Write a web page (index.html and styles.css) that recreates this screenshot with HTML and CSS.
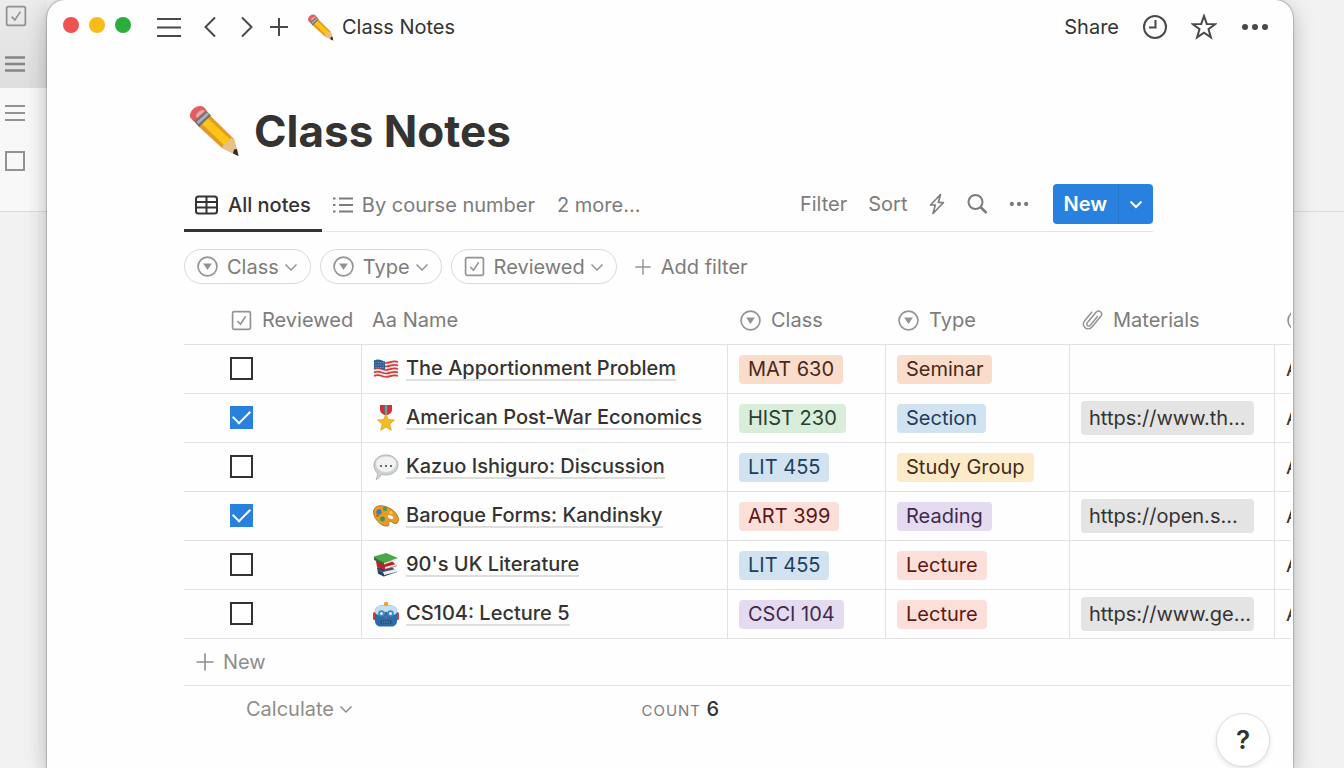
FILE: index.html
```html
<!DOCTYPE html>
<html lang="en">
<head>
  <meta charset="UTF-8">
  <meta name="viewport" content="width=device-width, initial-scale=1">
  <title>Class Notes</title>
  <link rel="stylesheet" href="styles.css">
</head>
<body>
  <svg class="sprite" aria-hidden="true">
    <symbol id="select" viewBox="0 0 20 20">
      <circle cx="10" cy="10" r="9" fill="none" stroke="currentColor" stroke-width="1.6"/>
      <path d="M5.8 7.2h8.4L10 13.4z" fill="currentColor"/>
    </symbol>
    <symbol id="check" viewBox="0 0 20 20">
      <rect x="1.5" y="1.5" width="17" height="17" rx="1.5" fill="none" stroke="currentColor" stroke-width="1.6"/>
      <path d="M6 10.5l3 3 5-7.500" fill="none" stroke="currentColor" stroke-width="1.5"/>
    </symbol>
    <symbol id="down" viewBox="0 0 14 14">
      <path d="M1.500 4.500L7 10l5.500-5.500" fill="none" stroke="currentColor" stroke-width="1.5"/>
    </symbol>
    <symbol id="plus" viewBox="0 0 20 20">
      <path d="M10 1.500v17M1.500 10h17" fill="none" stroke="currentColor" stroke-width="1.6"/>
    </symbol>
    <symbol id="dots" viewBox="0 0 28 28">
      <g fill="currentColor"><circle cx="4" cy="14" r="3"/><circle cx="14" cy="14" r="3"/><circle cx="24" cy="14" r="3"/></g>
    </symbol>
    <symbol id="lines" viewBox="0 0 24 24">
      <path d="M0 4h24M0 12.500h24M0 21h24" fill="none" stroke="currentColor" stroke-width="2"/>
    </symbol>
    <symbol id="pencil" viewBox="0 0 52 52">
      <path d="M10 21L22 10.500 46 34l4.500 17L34 43z" fill="#e39a22"/>
      <path d="M13.500 18.500L19.500 13 43 35l-6 6z" fill="#fcc419"/>
      <path d="M34 43l2.500-5 4.500-1 1.500-4 3.500 1 4.500 17z" fill="#e8c08c"/>
      <path d="M45 48.500l1-4 3-.5 1.500 7z" fill="#2d2b2b"/>
      <path d="M5 15L17 4.500l6 6L11 22z" fill="#6c7276"/>
      <path d="M8.500 17l10.500-9.500 2 2L10.500 19z" fill="#a9afb3"/>
      <path d="M6 16.500C2 13 1 11 2.500 8 4 4 8 1 12 1c3 0 5.500 2 6.500 4.500z" fill="#df5f62"/>
      <path d="M8 12c0-4 3-6.500 7-7l2 1-8 7z" fill="#efa5a3"/>
    </symbol>
    <symbol id="flag" viewBox="0 0 26 26">
      <path d="M1 5c5-3 8 1 12 1s7-3 12-1v15c-5-2-8 1-12 1s-7-3-12 0z" fill="#f3eded"/>
      <path d="M1 6c5-3 8 1 12 1s7-3 12-1M1 9.500c5-3 8 1 12 1s7-3 12-1M1 13c5-3 8 1 12 1s7-3 12-1M1 16.500c5-3 8 1 12 1s7-3 12-1M1 20c5-3 8 1 12 1s7-3 12-1" fill="none" stroke="#d83b3d" stroke-width="1.700"/>
      <path d="M1 4.500c5-2.500 8 .5 11 1v8c-3-.5-6-3-11-.5z" fill="#2c5f98"/>
      <path d="M2.500 6.500h9M2.500 9h9M2.500 11.500h9" stroke="#9dbbd6" stroke-width=".8" stroke-dasharray="1 1.400"/>
    </symbol>
    <symbol id="medal" viewBox="0 0 26 26">
      <path d="M7 0h12v5c0 2-2 4-4.500 5h-3C9 9 7 7 7 5z" fill="#d62c38"/>
      <path d="M11 0h4v9h-4z" fill="#536b75"/>
      <path d="M12.600 0h.9v9h-.9z" fill="#b9c8cc"/>
      <path d="M13 9l2.300 5.600 6.200.4-4.800 4 1.600 6.300L13 22l-5.300 3.300L9.300 19l-4.800-4 6.200-.4z" fill="#f6bd22" stroke="#dda01e" stroke-width=".8"/>
    </symbol>
    <symbol id="speech" viewBox="0 0 26 26">
      <path d="M13 1c7 0 12 4.500 12 10S20 21 13 21c-1.700 0-3.300-.2-4.700-.7C7 23 5 25 3 25.500c1.200-2 1.600-4 1.300-6.500C2.300 17 1 14.300 1 11 1 5.500 6 1 13 1z" fill="#cfd1d2" stroke="#a4a7a9" stroke-width=".8"/>
      <path d="M13 2.500c6 0 10 3 10 7.500s-5 8-10 8-10-3.500-10-8 4-7.500 10-7.500z" fill="#f1f2f2"/>
      <g fill="#494b4d"><circle cx="8" cy="12" r="1.100"/><circle cx="13" cy="12" r="1.100"/><circle cx="18" cy="12" r="1.100"/></g>
    </symbol>
    <symbol id="palette" viewBox="0 0 26 26">
      <path d="M.5 9C.5 4 5 2 10 3c8 1 15.500 8 15.500 13.500 0 3-2 4.500-4 4-2-.5-3-3-5-2s1 4-2 4.500C8 24 .5 15 .5 9z" fill="#e99b27" stroke="#b06c20" stroke-width=".9"/>
      <circle cx="6" cy="9" r="2.700" fill="#357fb5"/><circle cx="12" cy="6" r="2.200" fill="#45a249"/>
      <circle cx="18" cy="9.500" r="1.600" fill="#f7cf4c"/><circle cx="9.500" cy="16" r="2.500" fill="#469451"/>
      <circle cx="4.500" cy="12.700" r="1.100" fill="#c44231"/><ellipse cx="17.500" cy="14" rx="3" ry="1.700" transform="rotate(25 17.500 14)" fill="#fffdf7"/>
    </symbol>
    <symbol id="books" viewBox="0 0 26 26">
      <path d="M4 16l15-1 5 5-13 4.500-6-3z" fill="#35597a"/>
      <path d="M10 20l13-3v3l-12 3z" fill="#f2eee8"/>
      <path d="M3 9l15-1 6 6-13 4-7-3z" fill="#c01f2e"/>
      <path d="M12 15l11-3v2l-11 3z" fill="#f0e8df"/>
      <path d="M1 4.500L13 1l12 5-14 5z" fill="#4ba847"/>
      <path d="M1 4.500V8l10 5v-2z" fill="#287435"/>
      <path d="M11 11l13-4.500V8l-13 4.500z" fill="#dfe9da"/>
      <path d="M4 15l7 3v1l-6-2zM5 19l6 3v2.500l-6-3z" fill="#263e58"/>
    </symbol>
    <symbol id="robot" viewBox="0 0 26 26">
      <circle cx="13" cy="3" r="2.300" fill="#eda12f"/>
      <rect x="0" y="11" width="5" height="8" rx="1.500" fill="#c84135"/>
      <rect x="21" y="11" width="5" height="8" rx="1.500" fill="#c84135"/>
      <path d="M8 4.500h10c4 0 6 3 6 7V20c0 3.500-2.500 5.500-6 5.500H8c-3.500 0-6-2-6-5.500v-8.500c0-4 2-7 6-7z" fill="#2a6ca8"/>
      <path d="M8 4.500h10c4 0 6 3 6 7-2 3-5 3-7 2l-4-3-4 3c-2 1-5 1-7-2 0-4 2-7 6-7z" fill="#c3e0f0"/>
      <circle cx="8.500" cy="12.500" r="3.300" fill="#3c88c6"/><circle cx="17.500" cy="12.500" r="3.300" fill="#3c88c6"/>
      <circle cx="8.500" cy="12.500" r="1.500" fill="#e4f5fb"/><circle cx="17.500" cy="12.500" r="1.500" fill="#e4f5fb"/>
      <path d="M11.300 17l1.700-3 1.700 3z" fill="#e04a3e"/>
      <rect x="7.500" y="19.500" width="11" height="3" rx="1" fill="#1c4672"/>
      <path d="M9 21h8" stroke="#8cb9d3" stroke-width="1.200" stroke-dasharray="1.300 .9"/>
    </symbol>
  </svg>

  <div class="desktop">
    <aside class="rail">
      <div class="rail-top">
        <svg width="22" height="22"><use href="#check"/></svg>
        <svg class="rail-bold" width="20" height="20" viewBox="0 0 20 20"><path d="M0 3.500h20M0 10h20M0 16.500h20" stroke="currentColor" stroke-width="2.500"/></svg>
      </div>
      <div class="rail-mid">
        <svg width="20" height="20" viewBox="0 0 20 20"><path d="M0 3h20M0 10h20M0 17h20" stroke="currentColor" stroke-width="2"/></svg>
        <svg width="20" height="20" viewBox="0 0 20 20"><path d="M1 1h18v18H1z" fill="none" stroke="currentColor" stroke-width="2"/></svg>
      </div>
    </aside>

    <main class="window">
      <header class="topbar">
        <div class="lights"><i class="red"></i><i class="yellow"></i><i class="green"></i></div>
        <button class="icon-btn menu" aria-label="Menu"><svg width="24" height="24"><use href="#lines"/></svg></button>
        <button class="icon-btn back" aria-label="Back"><svg width="12" height="22" viewBox="0 0 12 22"><path d="M11 1.500L1.500 11l9.500 9.500" fill="none" stroke="currentColor" stroke-width="2"/></svg></button>
        <button class="icon-btn forward" aria-label="Forward"><svg width="12" height="22" viewBox="0 0 12 22"><path d="M1 1.500l9.500 9.500L1 20.500" fill="none" stroke="currentColor" stroke-width="2"/></svg></button>
        <button class="icon-btn add" aria-label="New tab"><svg width="20" height="20" viewBox="0 0 20 20"><path d="M10 1v18M1 10h18" stroke="currentColor" stroke-width="2"/></svg></button>
        <a class="crumb" href="#"><svg width="27" height="27"><use href="#pencil"/></svg>Class Notes</a>
        <div class="top-actions">
          <button class="share">Share</button>
          <button class="icon-btn" aria-label="Updates"><svg width="24" height="24" viewBox="0 0 24 24" fill="none" stroke="currentColor" stroke-width="2"><circle cx="12" cy="12" r="11"/><path d="M12.500 5v7.500H6"/></svg></button>
          <button class="icon-btn" aria-label="Favorite"><svg width="26" height="26" viewBox="0 0 26 26" fill="none" stroke="currentColor" stroke-width="2"><path d="M13 2l2.800 7.900 8.400.2-6.700 5.100 2.400 8.200L13 18.600l-6.900 4.800 2.400-8.200-6.700-5.100 8.400-.2z"/></svg></button>
          <button class="icon-btn" aria-label="More"><svg width="28" height="28"><use href="#dots"/></svg></button>
        </div>
      </header>

      <div class="page">
        <h1><svg width="52" height="52"><use href="#pencil"/></svg>Class Notes</h1>

        <div class="viewbar">
          <button class="tab active">
            <svg width="24" height="20" viewBox="0 0 24 20" fill="none" stroke="currentColor" stroke-width="2"><rect x="1" y="1.500" width="21" height="17" rx="2.500"/><path d="M1 7h21M1 12.500h21M11.500 2v16"/></svg>All notes
          </button>
          <button class="tab">
            <svg width="20" height="18" viewBox="0 0 20 18" fill="none" stroke="currentColor" stroke-width="1.800"><path d="M6 2.500h14M6 9h14M6 15.500h14M0 2.500h2.500M0 9h2.500M0 15.500h2.500"/></svg>By course number
          </button>
          <button class="tab">2 more...</button>
          <div class="tools">
            <button>Filter</button>
            <button>Sort</button>
            <button aria-label="Automations"><svg width="16" height="22" viewBox="0 0 16 22" fill="none" stroke="currentColor" stroke-width="1.600" stroke-linejoin="round"><path d="M11.500 1.500L1.500 12h4.800L4 20.500 14.500 9.500H9.300z"/></svg></button>
            <button aria-label="Search"><svg width="22" height="22" viewBox="0 0 22 22" fill="none" stroke="currentColor" stroke-width="2"><circle cx="9.500" cy="9" r="7"/><path d="M14.500 14l6 6" stroke-width="2.500"/></svg></button>
            <button aria-label="View options"><svg width="20" height="20"><use href="#dots"/></svg></button>
          </div>
          <div class="new">
            <button class="new-main">New</button>
            <button class="new-more" aria-label="Templates"><svg width="14" height="14" viewBox="0 0 14 14"><path d="M1.500 4.500L7 10l5.500-5.500" fill="none" stroke="currentColor" stroke-width="2"/></svg></button>
          </div>
        </div>

        <div class="filters">
          <button class="pill"><svg width="21" height="21"><use href="#select"/></svg>Class<svg class="caret" width="14" height="14"><use href="#down"/></svg></button>
          <button class="pill"><svg width="21" height="21"><use href="#select"/></svg>Type<svg class="caret" width="14" height="14"><use href="#down"/></svg></button>
          <button class="pill"><svg width="21" height="21"><use href="#check"/></svg>Reviewed<svg class="caret" width="14" height="14"><use href="#down"/></svg></button>
          <button class="add-filter"><svg width="18" height="18"><use href="#plus"/></svg>Add filter</button>
        </div>

        <div class="table-wrap">
          <table>
            <colgroup>
              <col class="c-reviewed"><col class="c-name"><col class="c-class"><col class="c-type"><col class="c-materials"><col class="c-extra">
            </colgroup>
            <thead>
              <tr>
                <th class="reviewed"><span><svg width="21" height="21"><use href="#check"/></svg>Reviewed</span></th>
                <th><span class="name-head">Aa Name</span></th>
                <th><span><svg width="21" height="21"><use href="#select"/></svg>Class</span></th>
                <th><span><svg width="21" height="21"><use href="#select"/></svg>Type</span></th>
                <th><span><svg width="21" height="24" viewBox="0 0 21 24" fill="none" stroke="currentColor" stroke-width="1.500" stroke-linecap="round"><path d="M15.500 8.500l-7.200 8.700c-1.700 2-4.700-.2-3-2.400L13.800 4.500c3-3.500 7.700.3 5 3.800L10 19c-4 4.700-11.500-.5-7.300-6.200l7-8.500"/></svg>Materials</span></th>
                <th><span><svg width="21" height="21"><use href="#select"/></svg></span></th>
              </tr>
            </thead>
            <tbody>
              <tr>
                <td class="reviewed"><input type="checkbox" aria-label="Reviewed: The Apportionment Problem"></td>
                <td><div class="name"><svg width="26" height="26"><use href="#flag"/></svg><a href="#">The Apportionment Problem</a></div></td>
                <td><span class="tag orange">MAT 630</span></td>
                <td><span class="tag orange">Seminar</span></td>
                <td></td>
                <td>A</td>
              </tr>
              <tr>
                <td class="reviewed"><input type="checkbox" checked aria-label="Reviewed: American Post-War Economics"></td>
                <td><div class="name"><svg width="26" height="26"><use href="#medal"/></svg><a href="#">American Post-War Economics</a></div></td>
                <td><span class="tag green">HIST 230</span></td>
                <td><span class="tag blue">Section</span></td>
                <td><a class="file" href="#">https://www.th...</a></td>
                <td>A</td>
              </tr>
              <tr>
                <td class="reviewed"><input type="checkbox" aria-label="Reviewed: Kazuo Ishiguro: Discussion"></td>
                <td><div class="name"><svg width="26" height="26"><use href="#speech"/></svg><a href="#">Kazuo Ishiguro: Discussion</a></div></td>
                <td><span class="tag blue">LIT 455</span></td>
                <td><span class="tag yellow">Study Group</span></td>
                <td></td>
                <td>A</td>
              </tr>
              <tr>
                <td class="reviewed"><input type="checkbox" checked aria-label="Reviewed: Baroque Forms: Kandinsky"></td>
                <td><div class="name"><svg width="26" height="26"><use href="#palette"/></svg><a href="#">Baroque Forms: Kandinsky</a></div></td>
                <td><span class="tag red">ART 399</span></td>
                <td><span class="tag purple">Reading</span></td>
                <td><a class="file" href="#">https://open.s...</a></td>
                <td>A</td>
              </tr>
              <tr>
                <td class="reviewed"><input type="checkbox" aria-label="Reviewed: 90's UK Literature"></td>
                <td><div class="name"><svg width="26" height="26"><use href="#books"/></svg><a href="#">90's UK Literature</a></div></td>
                <td><span class="tag blue">LIT 455</span></td>
                <td><span class="tag red">Lecture</span></td>
                <td></td>
                <td>A</td>
              </tr>
              <tr>
                <td class="reviewed"><input type="checkbox" aria-label="Reviewed: CS104: Lecture 5"></td>
                <td><div class="name"><svg width="26" height="26"><use href="#robot"/></svg><a href="#">CS104: Lecture 5</a></div></td>
                <td><span class="tag purple">CSCI 104</span></td>
                <td><span class="tag red">Lecture</span></td>
                <td><a class="file" href="#">https://www.ge...</a></td>
                <td>A</td>
              </tr>
            </tbody>
            <tfoot>
              <tr class="new-row">
                <td colspan="6"><button><svg width="20" height="20"><use href="#plus"/></svg>New</button></td>
              </tr>
              <tr class="calc-row">
                <td><button>Calculate<svg class="caret" width="14" height="14"><use href="#down"/></svg></button></td>
                <td class="count"><small>COUNT</small> 6</td>
                <td colspan="4"></td>
              </tr>
            </tfoot>
          </table>
        </div>
      </div>

      <button class="help" aria-label="Help">?</button>
    </main>

    <div class="behind"></div>
  </div>
</body>
</html>
```
FILE: styles.css
```css
* {
  box-sizing: border-box;
}
body {
  margin: 0;
  background: #f2f2f2;
  color: #343332;
  font-family: Inter, "Liberation Sans", sans-serif;
  font-size: 20px;
  line-height: 24px;
}
button {
  display: flex;
  align-items: center;
  padding: 0;
  border: none;
  background: none;
  color: inherit;
  font: inherit;
  white-space: nowrap;
  cursor: pointer;
}
a {
  color: inherit;
  text-decoration: none;
}
svg {
  display: block;
  flex: none;
}
.sprite {
  position: absolute;
  width: 0;
  height: 0;
}

.desktop {
  display: grid;
  grid-template-columns: 47px 1fr 51px;
  height: 100vh;
  overflow: hidden;
}
.rail {
  color: #929292;
}
.rail-top,
.rail-mid {
  display: flex;
  flex-direction: column;
  padding-left: 5px;
}
.rail-top {
  height: 88px;
  padding-top: 5px;
  gap: 27px;
  background: linear-gradient(#ececec, #dedede);
}
.rail-bold {
  color: #858585;
}
.rail-mid {
  height: 124px;
  padding-top: 15px;
  gap: 28px;
  background: #f8f8f8;
  border-bottom: 1px solid #dcdcdc;
}
.behind {
  height: 212px;
  border-bottom: 1px solid #dcdcdc;
}

/* window */
.window {
  position: relative;
  min-width: 0;
  overflow: hidden;
  background: #fefefe;
  border-radius: 18px 18px 0 0;
  box-shadow: 0 0 2px rgba(0,0,0,0.6), 0 6px 22px rgba(0,0,0,0.25);
}
.topbar {
  display: flex;
  align-items: center;
  height: 54px;
  padding: 0 24px 0 16px;
}
.lights {
  display: flex;
  gap: 10px;
  margin-right: 26px;
  padding-bottom: 5px;
}
.lights i {
  width: 16px;
  height: 16px;
  border-radius: 50%;
}
.lights .red { background: #ed5350; }
.lights .yellow { background: #f9bb17; }
.lights .green { background: #29ae3b; }
.icon-btn {
  color: #4a4948;
}
.menu { margin-right: 23px; }
.back { margin-right: 25px; }
.forward { margin-right: 16px; }
.add { margin-right: 18px; }
.crumb {
  display: flex;
  align-items: center;
  gap: 8px;
}
.top-actions {
  display: flex;
  align-items: center;
  gap: 24px;
  margin-left: auto;
}

/* page */
.page {
  padding: 48px 2px 0 137px;
}
h1 {
  display: flex;
  align-items: center;
  gap: 14px;
  margin: 0;
  padding-left: 4px;
  font-size: 44px;
  line-height: 58px;
  font-weight: 700;
}
.viewbar {
  display: flex;
  align-items: center;
  height: 50px;
  margin: 22px 138px 0 0;
  border-bottom: 1px solid #e4e6e6;
  color: #7d7c7b;
}
.tab {
  height: 50px;
  padding: 0 11px;
  gap: 9px;
  border-bottom: 3px solid transparent;
}
.tab.active {
  color: #343332;
  font-weight: 500;
  border-color: #343332;
}
.tools {
  display: flex;
  align-items: center;
  gap: 21px;
  margin-left: auto;
  padding-bottom: 6px;
}
.new {
  display: flex;
  height: 40px;
  margin: 0 0 6px 24px;
  border-radius: 4px;
  background: #2981df;
  color: #fff;
  overflow: hidden;
}
.new-main {
  padding: 0 11px;
  font-weight: 600;
}
.new-more {
  padding: 0 10px;
  border-left: 1px solid #2677d0;
}

.filters {
  display: flex;
  align-items: center;
  gap: 9px;
  margin-top: 17px;
  color: #7d7c7b;
}
.pill {
  height: 35px;
  padding: 0 12px;
  border: 1px solid #d9d9d9;
  border-radius: 18px;
}
.pill svg:first-child {
  margin-right: 9px;
}
.caret {
  margin-left: 5px;
}
.filters svg {
  color: #959493;
}
.add-filter {
  gap: 9px;
  margin-left: 8px;
}

/* table */
.table-wrap {
  margin-top: 12px;
  overflow: hidden;
}
table {
  width: 1320px;
  table-layout: fixed;
  border-collapse: separate;
  border-spacing: 0;
}
.c-reviewed { width: 178px; }
.c-name { width: 366px; }
.c-class { width: 158px; }
.c-type { width: 184px; }
.c-materials { width: 205px; }
th {
  height: 49px;
  padding: 0 12px;
  border-bottom: 1px solid #e2e2e2;
  color: #7d7c7b;
  font-weight: 400;
  text-align: left;
}
th span {
  display: flex;
  align-items: center;
  gap: 10px;
}
th svg {
  color: #959493;
}
th .name-head {
  margin-left: -2px;
}
tbody td {
  height: 49px;
  padding: 0 11px;
  border-right: 1px solid #e2e2e2;
  border-bottom: 1px solid #e2e2e2;
}
th.reviewed {
  padding: 0 0 0 47px;
}
td.reviewed {
  padding: 0 0 2px 46px;
}
input[type="checkbox"] {
  appearance: none;
  display: flex;
  align-items: center;
  justify-content: center;
  width: 23px;
  height: 23px;
  margin: 0;
  border: 2px solid #343332;
  background: #fff;
}
input[type="checkbox"]:checked {
  border-color: #2981df;
  background: #2981df;
}
input[type="checkbox"]:checked::after {
  content: "";
  width: 15px;
  height: 8px;
  flex: none;
  margin-bottom: 5px;
  border-left: 2px solid #fff;
  border-bottom: 2px solid #fff;
  transform: rotate(-45deg);
}
.name {
  display: flex;
  align-items: center;
  gap: 7px;
  font-weight: 500;
}
.name a {
  line-height: 22px;
  border-bottom: 2px solid #dededd;
}
.tag {
  display: inline-block;
  padding: 0 9px;
  border-radius: 4px;
  line-height: 29px;
  vertical-align: middle;
}
.orange { background: #f9dcc9; color: #49291a; }
.green { background: #d8edda; color: #2b3d30; }
.blue { background: #d1e3f0; color: #203e5e; }
.yellow { background: #fdeac8; color: #402c1b; }
.tag.red { background: #fddfda; color: #5d1715; }
.purple { background: #e5dbf0; color: #41294d; }
.file {
  display: block;
  width: 173px;
  padding: 0 8px;
  border-radius: 4px;
  background: #e4e4e4;
  line-height: 34px;
}
.new-row td {
  height: 47px;
  padding: 0 11px;
  border-bottom: 1px solid #e2e2e2;
  color: #8e8d8c;
}
.new-row button {
  gap: 8px;
}
.calc-row td {
  height: 46px;
  padding: 0;
}
.calc-row button {
  margin-left: 62px;
  color: #8e8d8c;
}
.calc-row .count {
  padding: 2px 9px 0 0;
  font-weight: 500;
  text-align: right;
}
.count small {
  color: #7d7c7b;
  font-size: 15px;
  font-weight: 400;
  letter-spacing: 1px;
}

.help {
  position: absolute;
  right: 23px;
  bottom: 1px;
  justify-content: center;
  width: 54px;
  height: 54px;
  border: 1px solid #dedede;
  border-radius: 50%;
  background: #fff;
  box-shadow: 0 2px 5px rgba(0,0,0,0.1);
  font-size: 26px;
  font-weight: 600;
}
```
